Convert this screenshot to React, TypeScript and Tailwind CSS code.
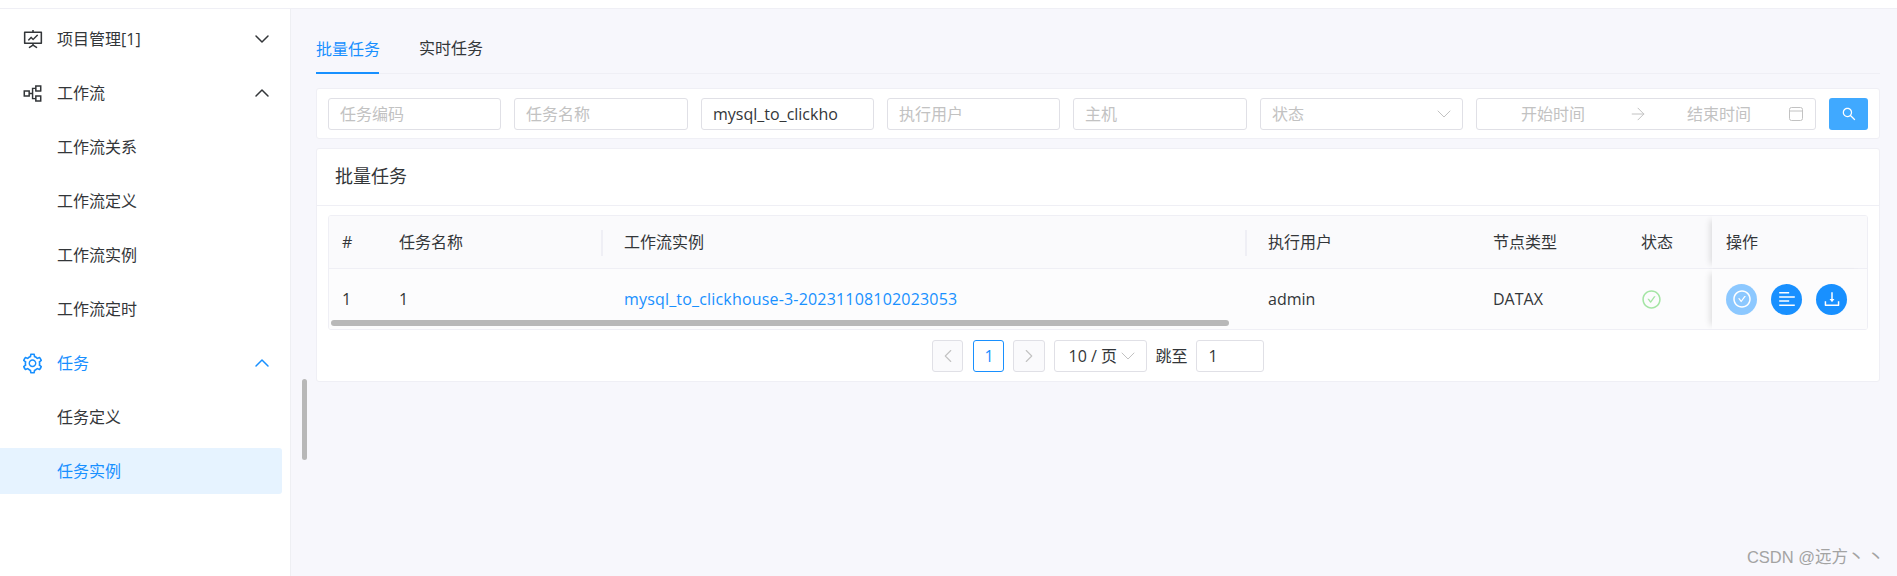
import type { ReactNode } from 'react'
import { ArrowRight, ChevronDown, ChevronLeft, ChevronRight, ChevronUp } from 'lucide-react'
import {
  AiOutlineAlignLeft,
  AiOutlineCheckCircle,
  AiOutlineDownload,
  AiOutlineFundProjectionScreen,
  AiOutlinePartition,
  AiOutlineSearch,
  AiOutlineSetting,
} from 'react-icons/ai'

const FONT = "font-['Open_Sans','Noto_Sans_CJK_SC',sans-serif]"

const WORKFLOW_ITEMS = ['工作流关系', '工作流定义', '工作流实例', '工作流定时']

function NavRow({
  icon,
  label,
  chevron,
  active = false,
  selected = false,
}: {
  icon?: ReactNode
  label: string
  chevron?: 'up' | 'down'
  active?: boolean
  selected?: boolean
}) {
  return (
    <div
      className={`mr-2 flex h-[46px] items-center rounded-r-[3px] pr-2 text-base ${
        active ? 'text-[#1890ff]' : 'text-[#333639]'
      } ${selected ? 'bg-[#e6f3ff]' : ''}`}
    >
      <span className="flex w-[57px] shrink-0 justify-center pl-[11px] pr-[3px]">{icon}</span>
      <span className="flex-1">{label}</span>
      {chevron === 'down' ? <ChevronDown className="size-6" strokeWidth={1.5} /> : null}
      {chevron === 'up' ? <ChevronUp className="size-6" strokeWidth={1.5} /> : null}
    </div>
  )
}

function Sidebar() {
  return (
    <aside className="flex w-[291px] shrink-0 flex-col gap-2 border-r border-[#eeeff3] bg-white pt-[7px]">
      <NavRow
        icon={<AiOutlineFundProjectionScreen className="size-[22px]" />}
        label="项目管理[1]"
        chevron="down"
      />
      <NavRow icon={<AiOutlinePartition className="size-[23px]" />} label="工作流" chevron="up" />
      {WORKFLOW_ITEMS.map((item) => (
        <NavRow key={item} label={item} />
      ))}
      <NavRow icon={<AiOutlineSetting className="size-[23px]" />} label="任务" chevron="up" active />
      <NavRow label="任务定义" />
      <NavRow label="任务实例" active selected />
    </aside>
  )
}

function Field({
  width,
  children,
  muted = true,
}: {
  width: string
  children: ReactNode
  muted?: boolean
}) {
  return (
    <div
      className={`flex h-8 shrink-0 items-center rounded-[3px] border border-[#e0e0e6] px-[11px] text-base ${width} ${
        muted ? 'text-[#c2c2c2]' : 'text-[#333639]'
      }`}
    >
      {children}
    </div>
  )
}

function Filters() {
  return (
    <div className="mt-[14px] flex h-[51px] items-center gap-[13px] rounded-[3px] border border-[#efeff5] bg-white pl-[11px]">
      <Field width="w-[173px]">任务编码</Field>
      <Field width="w-[174px]">任务名称</Field>
      <Field width="w-[173px]" muted={false}>
        mysql_to_clickho
      </Field>
      <Field width="w-[173px]">执行用户</Field>
      <Field width="w-[174px]">主机</Field>
      <Field width="w-[203px] justify-between">
        状态
        <ChevronDown className="-mr-[5px] size-6 text-[#c2c2c2]" strokeWidth={1} />
      </Field>
      <Field width="w-[340px]">
        <span className="w-[140px] pl-[33px] whitespace-nowrap">开始时间</span>
        <ArrowRight className="size-5" strokeWidth={1.2} />
        <span className="pl-[39px] whitespace-nowrap">结束时间</span>
        <svg className="ml-auto size-4" viewBox="0 0 16 16" fill="none" stroke="#c2c2c2">
          <rect x="1.5" y="1.5" width="13" height="13" rx="2" />
          <path d="M1.5 5h13" />
        </svg>
      </Field>
      <button
        type="button"
        className="flex h-8 w-[39px] shrink-0 items-center justify-center rounded-[3px] bg-[#40a9ff] text-white"
      >
        <AiOutlineSearch className="size-4" />
      </button>
    </div>
  )
}

const COLUMNS = [
  { title: '#', value: '1', width: 'w-[57px]' },
  { title: '任务名称', value: '1', width: 'w-[225px]' },
  { title: '工作流实例', value: 'mysql_to_clickhouse-3-20231108102023053', width: 'w-[644px]', link: true },
  { title: '执行用户', value: 'admin', width: 'w-[225px]' },
  { title: '节点类型', value: 'DATAX', width: 'w-[148px]' },
]

function Actions() {
  return (
    <div className="flex gap-[14px]">
      <span className="flex size-[31px] items-center justify-center rounded-full bg-[#8cc8ff] text-white">
        <AiOutlineCheckCircle className="size-5" />
      </span>
      <span className="flex size-[31px] items-center justify-center rounded-full bg-[#1890ff] text-white">
        <AiOutlineAlignLeft className="size-5" />
      </span>
      <span className="flex size-[31px] items-center justify-center rounded-full bg-[#1890ff] text-white">
        <AiOutlineDownload className="size-5" />
      </span>
    </div>
  )
}

function TaskTable() {
  return (
    <div className="relative overflow-hidden rounded-[3px] border border-[#efeff5] text-base text-[#333639]">
      <div className="flex h-[53px] items-center border-b border-[#efeff5] bg-[#fafafc]">
        {COLUMNS.map((col, index) => (
          <div key={col.title} className={`relative pl-[13px] ${col.width}`}>
            {col.title}
            {index === 1 || index === 2 ? (
              <span className="absolute top-0 right-2 h-[26px] w-0.5 bg-[#efeff5]" />
            ) : null}
          </div>
        ))}
        <div className="w-[84px] pl-[13px]">状态</div>
        <div className="flex h-full flex-1 items-center bg-[#fafafc] pl-[14px] shadow-[-6px_0_6px_-4px_rgba(0,0,0,0.12)]">
          操作
        </div>
      </div>
      <div className="flex h-[60px] items-center bg-[#fcfcfd]">
        {COLUMNS.map((col) => (
          <div
            key={col.title}
            className={`pl-[13px] ${col.width} ${col.link ? 'tracking-[0.18px] text-[#1890ff]' : ''}`}
          >
            {col.value}
          </div>
        ))}
        <div className="w-[84px] pl-[13px]">
          <AiOutlineCheckCircle className="size-[21px] text-[#a4e5a4]" />
        </div>
        <div className="flex h-full flex-1 items-center bg-[#fcfcfd] pl-[14px] shadow-[-6px_0_6px_-4px_rgba(0,0,0,0.12)]">
          <Actions />
        </div>
      </div>
      {/* horizontal scrollbar thumb sits over the row */}
      <div className="absolute bottom-[3px] left-[2px] h-[6px] w-[898px] rounded-full bg-[#b8b8b8]" />
    </div>
  )
}

function Pagination() {
  return (
    <div className="flex h-[51px] items-center justify-center text-base text-[#333639]">
      <span className="flex h-8 w-[31px] items-center justify-center rounded-[3px] border border-[#e0e0e6] bg-[#fafafc] text-[#c2c2c2]">
        <ChevronLeft className="size-[22px]" strokeWidth={1.2} />
      </span>
      <span className="ml-[10px] flex h-8 w-[31px] items-center justify-center rounded-[3px] border border-[#1890ff] text-[#1890ff]">
        1
      </span>
      <span className="ml-[9px] flex h-8 w-8 items-center justify-center rounded-[3px] border border-[#e0e0e6] bg-[#fafafc] text-[#c2c2c2]">
        <ChevronRight className="size-[22px]" strokeWidth={1.2} />
      </span>
      <span className="ml-[9px] flex h-8 w-[93px] items-center rounded-[3px] border border-[#e0e0e6] pl-[13px] whitespace-nowrap">
        10 / 页
        <ChevronDown className="-ml-[1px] size-6 shrink-0 text-[#c2c2c2]" strokeWidth={1} />
      </span>
      <span className="ml-2">跳至</span>
      <span className="ml-2 flex h-8 w-[68px] items-center rounded-[3px] border border-[#e0e0e6] pl-3">
        1
      </span>
    </div>
  )
}

export default function App() {
  return (
    <div className={`relative flex h-[576px] flex-col overflow-hidden bg-[#f7f7fc] ${FONT}`}>
      <div className="h-[9px] shrink-0 border-b border-[#efeff5] bg-white" />
      <div className="flex min-h-0 flex-1">
        <Sidebar />
        <main className="flex-1 pr-[17px] pl-[25px]">
          <div className="flex h-[65px] items-end gap-10 border-b border-[#efeff5] text-base">
            <div className="-mb-px h-[42px] w-[63px] whitespace-nowrap border-b-2 border-[#1890ff] pt-[5px] text-[#1890ff]">
              批量任务
            </div>
            <div className="h-[42px] pt-[5px] text-[#333639]">实时任务</div>
          </div>
          <Filters />
          <div className="mt-[9px] rounded-[3px] border border-[#efeff5] bg-white">
            <div className="flex h-[57px] items-center border-b border-[#efeff5] pb-[2px] pl-[18px] text-lg text-[#333639]">
              批量任务
            </div>
            <div className="pt-[9px] pr-[11px] pl-[11px]">
              <TaskTable />
              <Pagination />
            </div>
          </div>
        </main>
      </div>
      {/* page scrollbar and the image host's watermark lie over the page */}
      <div className="absolute top-[379px] left-[302px] h-[81px] w-[5px] rounded-full bg-[#b8b8b8]" />
      <div className="absolute right-[10px] bottom-[6px] font-['Liberation_Sans','Noto_Sans_CJK_SC',sans-serif] text-[16.5px] text-[#a3a3a3]">
        CSDN @远方<span className="tracking-[3px]">丶丶</span>
      </div>
    </div>
  )
}
